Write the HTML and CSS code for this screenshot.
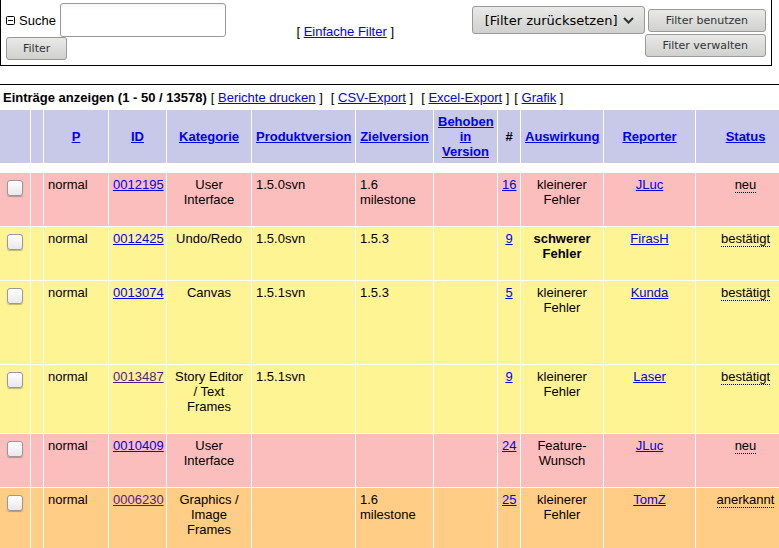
FILE: index.html
```html
<!DOCTYPE html>
<html lang="de">
<head>
<meta charset="utf-8">
<title>Einträge anzeigen</title>
<link rel="stylesheet" href="styles.css">
</head>
<body>
<form class="filter">
  <div class="search">
    <div class="search-row">
      <a class="toggle" href="#" aria-label="Filter einklappen"><svg width="9" height="9" viewBox="0 0 9 9"><rect x=".5" y=".5" width="8" height="8" rx="1" fill="#fff" stroke="#000"/><path d="M2 4.500h5" stroke="#000"/></svg></a>
      <label for="q">Suche</label>
      <input id="q" class="query" type="text">
    </div>
    <button class="btn" type="button">Filter</button>
  </div>
  <div class="simple">[ <a href="#">Einfache Filter</a> ]</div>
  <div class="actions">
    <span class="select-wrap">
      <select class="select" aria-label="Gespeicherte Filter"><option>[Filter zurücksetzen]</option></select>
      <svg class="arrow" width="11" height="7" viewBox="0 0 11 7"><path d="M1 1l4.500 4.500L10 1" fill="none" stroke="#2e3436" stroke-width="2"/></svg>
    </span>
    <button class="btn btn-wide" type="button">Filter benutzen</button>
    <button class="btn btn-wide" type="button">Filter verwalten</button>
  </div>
</form>

<main class="issues">
  <div class="bar">
    <strong>Einträge anzeigen (1 - 50 / 13578)</strong>
    <span class="first">[ <a href="#">Berichte drucken</a> ]</span>
    <span class="group">[ <a href="#">CSV-Export</a> ]</span>
    <span class="group">[ <a href="#">Excel-Export</a> ]</span>
    <span class="last">[ <a href="#">Grafik</a> ]</span>
  </div>
  <table class="list">
    <colgroup>
      <col class="c-check"><col class="c-edit"><col class="c-prio"><col class="c-id"><col class="c-cat"><col class="c-prod"><col class="c-target"><col class="c-fixed"><col class="c-notes"><col class="c-sev"><col class="c-rep"><col class="c-status">
    </colgroup>
    <thead>
      <tr>
        <th></th><th></th><th><a href="#">P</a></th><th><a href="#">ID</a></th><th><a href="#">Kategorie</a></th><th><a href="#">Produktversion</a></th><th><a href="#">Zielversion</a></th><th><a href="#">Behoben in Version</a></th><th>#</th><th><a href="#">Auswirkung</a></th><th><a href="#">Reporter</a></th><th><a href="#">Status</a></th>
      </tr>
      <tr class="spacer"><td colspan="12"></td></tr>
    </thead>
    <tbody>
      <tr class="new">
        <td class="check"><input type="checkbox" aria-label="0012195"></td><td></td><td class="text">normal</td><td><a href="#">0012195</a></td><td class="cat">User Interface</td><td class="text">1.5.0svn</td><td class="text">1.6 milestone</td><td></td><td><a href="#">16</a></td><td>kleinerer Fehler</td><td><a href="#">JLuc</a></td><td><span class="state">neu</span></td>
      </tr>
      <tr class="confirmed">
        <td class="check"><input type="checkbox" aria-label="0012425"></td><td></td><td class="text">normal</td><td><a href="#">0012425</a></td><td class="cat">Undo/Redo</td><td class="text">1.5.0svn</td><td class="text">1.5.3</td><td></td><td><a href="#">9</a></td><td><b>schwerer Fehler</b></td><td><a href="#">FirasH</a></td><td><span class="state">bestätigt</span></td>
      </tr>
      <tr class="confirmed tall">
        <td class="check"><input type="checkbox" aria-label="0013074"></td><td></td><td class="text">normal</td><td><a href="#">0013074</a></td><td class="cat">Canvas</td><td class="text">1.5.1svn</td><td class="text">1.5.3</td><td></td><td><a href="#">5</a></td><td>kleinerer Fehler</td><td><a href="#">Kunda</a></td><td><span class="state">bestätigt</span></td>
      </tr>
      <tr class="confirmed">
        <td class="check"><input type="checkbox" aria-label="0013487"></td><td></td><td class="text">normal</td><td><a class="seen" href="#">0013487</a></td><td class="cat">Story Editor / Text Frames</td><td class="text">1.5.1svn</td><td></td><td></td><td><a href="#">9</a></td><td>kleinerer Fehler</td><td><a href="#">Laser</a></td><td><span class="state">bestätigt</span></td>
      </tr>
      <tr class="new">
        <td class="check"><input type="checkbox" aria-label="0010409"></td><td></td><td class="text">normal</td><td><a href="#">0010409</a></td><td class="cat">User Interface</td><td></td><td></td><td></td><td><a href="#">24</a></td><td>Feature-Wunsch</td><td><a href="#">JLuc</a></td><td><span class="state">neu</span></td>
      </tr>
      <tr class="acknowledged">
        <td class="check"><input type="checkbox" aria-label="0006230"></td><td></td><td class="text">normal</td><td><a class="seen" href="#">0006230</a></td><td class="cat">Graphics / Image Frames</td><td></td><td class="text">1.6 milestone</td><td></td><td><a href="#">25</a></td><td>kleinerer Fehler</td><td><a href="#">TomZ</a></td><td><span class="state">anerkannt</span></td>
      </tr>
    </tbody>
  </table>
</main>
</body>
</html>
```
FILE: styles.css
```css
* { box-sizing: border-box; }
html { overflow: hidden; }
body {
  margin: 0;
  background: #fff;
  color: #000;
  font: 13px/15px "Liberation Sans", Arial, sans-serif;
}
a { color: #0000ee; }
a.seen { color: #551a8b; }

.filter {
  display: grid;
  grid-template-columns: 38fr 12fr 49fr;
  align-items: start;
  margin-right: 7px;
  padding: 3px 5px 5px;
  border: solid #000;
  border-width: 0 1px 1px;
}
.search-row { display: flex; align-items: center; gap: 4px; }
.toggle { display: flex; }
.query {
  width: 166px;
  height: 34px;
  border: 1px solid #999;
  border-radius: 3px;
  background: linear-gradient(#f4f4f4, #fff 6px);
}
.simple { align-self: center; padding-left: 2px; white-space: nowrap; }
.actions {
  display: flex;
  flex-wrap: wrap;
  justify-content: flex-end;
  align-items: center;
  column-gap: 3px;
  padding-top: 3px;
}
.btn, .select {
  border: 1px solid #999;
  border-radius: 3px;
  background: linear-gradient(#e9e9e7, #d0d0ce);
  font-family: "DejaVu Sans", sans-serif;
}
.btn {
  display: block;
  height: 23px;
  padding: 0 16px;
  color: #2e3436;
  font-size: 11px;
  line-height: 15px;
}
.btn-wide { padding: 0 17px; }
.select-wrap { position: relative; display: block; }
.select {
  display: block;
  height: 28px;
  padding: 0 26px 0 12px;
  appearance: none;
  color: #000;
  font-size: 13px;
}
.arrow { position: absolute; top: 11px; right: 11px; pointer-events: none; }

.issues { margin-top: 18px; border-top: 1px solid #000; }
.bar {
  display: flex;
  padding: 5px 3px;
  white-space: nowrap;
}
.first { margin-left: 4px; }
.group { margin-left: 8px; }
.last { margin-left: 5px; }

.list {
  width: 796px;
  table-layout: fixed;
  border-spacing: 0;
}
.c-check { width: 31px; }
.c-edit { width: 13px; }
.c-prio { width: 65px; }
.c-id { width: 58px; }
.c-cat { width: 85px; }
.c-prod { width: 104px; }
.c-target { width: 78px; }
.c-fixed { width: 64px; }
.c-notes { width: 23px; }
.c-sev { width: 83px; }
.c-rep { width: 92px; }
.c-status { width: 100px; }

th, td {
  padding: 4px;
  border-right: 1px solid #fff;
  text-align: center;
}
th { background: #c8c8e8; }
td {
  padding-bottom: 19px;
  border-bottom: 1px solid #fff;
  vertical-align: top;
}
.spacer td { height: 10px; padding: 0; border: 0; }
.tall td { height: 84px; }
td.text { text-align: left; }
td.cat { padding-left: 6px; padding-right: 6px; }
.new td { background: #fcbdbd; }
.confirmed td { background: #fff494; }
.acknowledged td { background: #ffcd85; }
.state { border-bottom: 1px dotted #000; }

td.check { padding: 7px 7px 0; }
.check input {
  display: block;
  width: 16px;
  height: 16px;
  margin: 0;
  appearance: none;
  border: 1px solid #999;
  border-radius: 3px;
  background: linear-gradient(#fff, #e8e8e8);
  box-shadow: 0 1px 1px rgba(0, 0, 0, .25);
}
```
